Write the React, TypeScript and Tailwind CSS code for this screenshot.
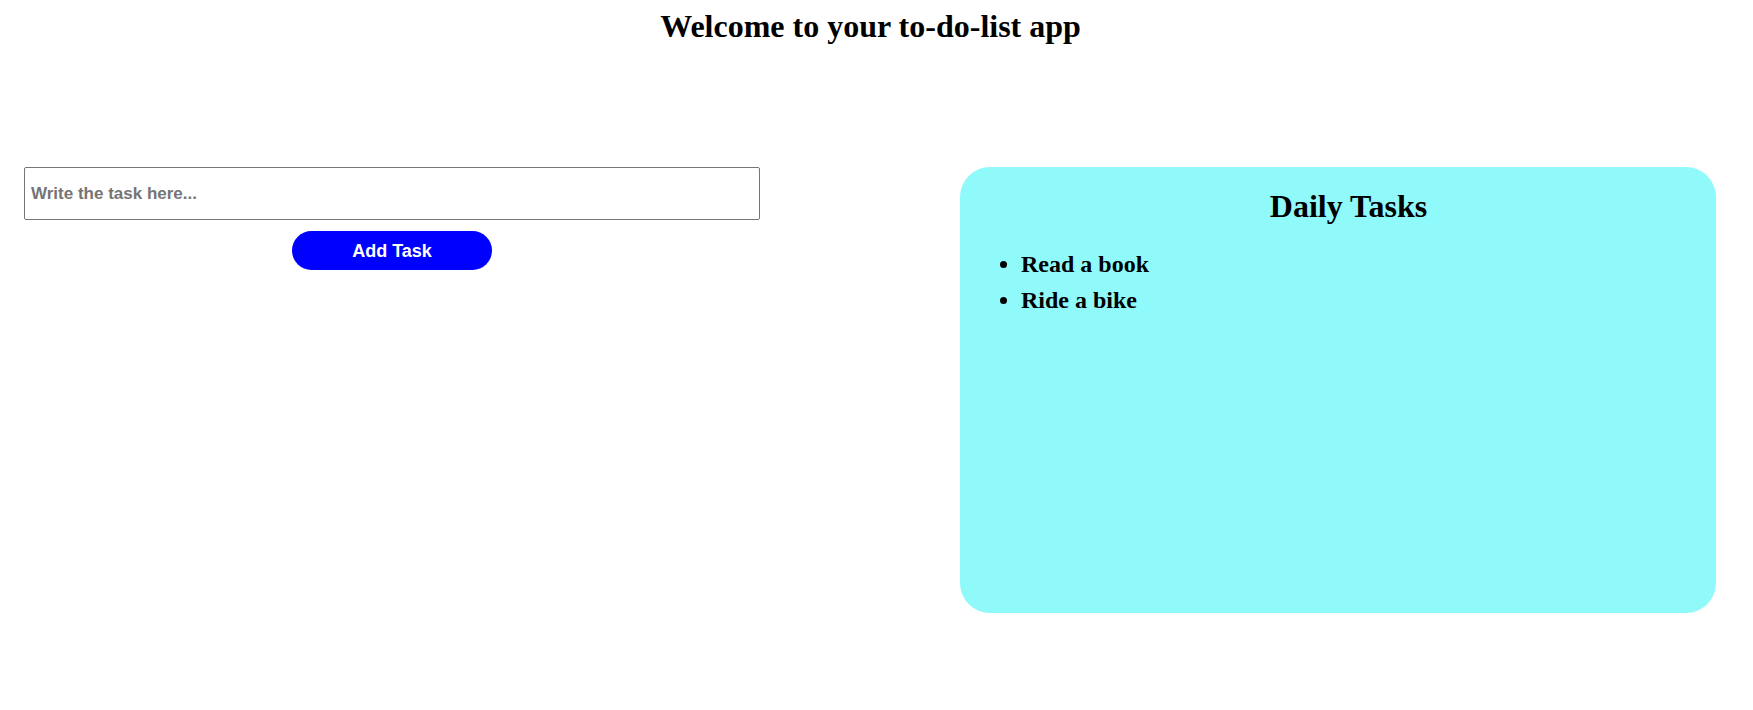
export default function App() {
  const serif = { fontFamily: '"Liberation Serif", "Times New Roman", serif' };
  const sans = { fontFamily: '"Liberation Sans", Arial, sans-serif' };
  return (
    <div className="w-[1753px] h-[710px] bg-white text-black" style={serif}>
      <h1 className="pt-2 text-center text-[32px] font-bold leading-[36.8px] pr-3">
        Welcome to your to-do-list app
      </h1>
      <div className="mt-[122px] flex items-start pl-6">
        <div className="w-[736px] flex flex-col items-center">
          <input
            type="text"
            placeholder="Write the task here..."
            className="w-full h-[53px] border border-[#767676] rounded-[2px] pl-[6px] pr-[7px] pt-[2px] text-[17px] font-bold placeholder:text-[#757575] outline-none"
            style={sans}
          />
          <button
            className="mt-[11px] w-[200px] h-[39px] rounded-full bg-[#0000ff] text-white text-[18px] font-bold pt-[2px]"
            style={sans}
          >
            Add Task
          </button>
        </div>
        <div className="ml-[200px] w-[756px] h-[446px] rounded-[30px] bg-[#90fafa] pl-[21px] pt-[21px]">
          <h2 className="text-center text-[32px] font-bold leading-[36.8px]">Daily Tasks</h2>
          <ul className="mt-[26px] list-disc pl-[40px] text-[24px] font-bold leading-[27.6px] flex flex-col gap-[8.4px]">
            <li>Read a book</li>
            <li>Ride a bike</li>
          </ul>
        </div>
      </div>
    </div>
  );
}
